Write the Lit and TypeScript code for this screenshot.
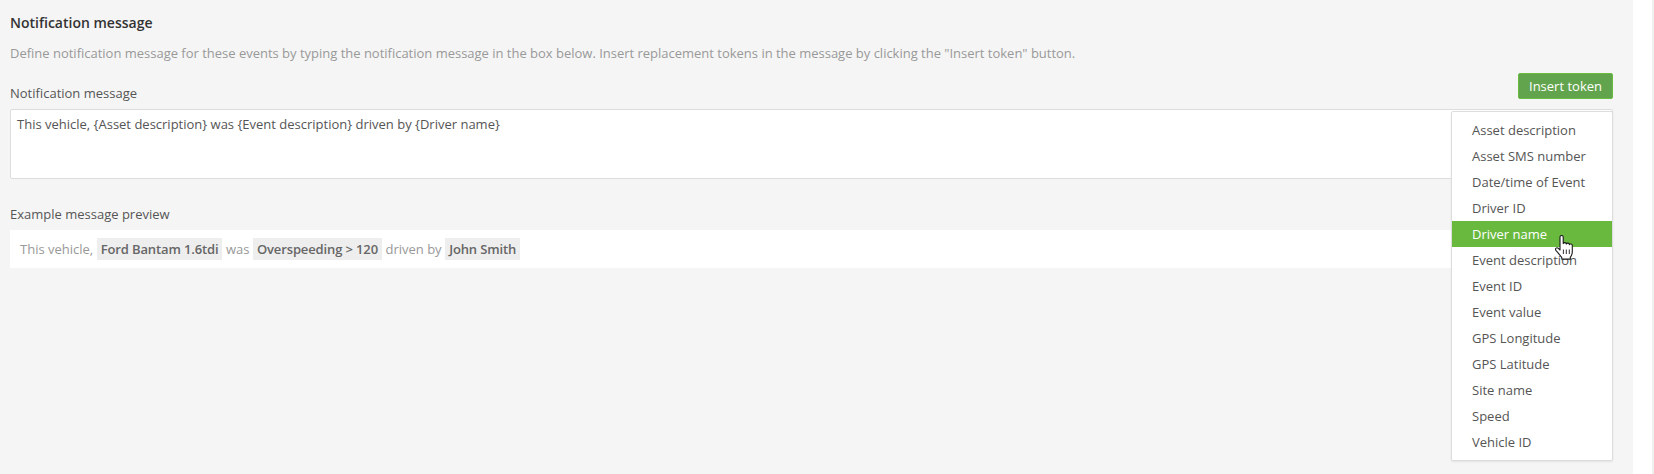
import { LitElement, html, css } from "lit";
import { customElement } from "lit/decorators.js";

const TOKENS = [
  "Asset description", "Asset SMS number", "Date/time of Event", "Driver ID", "Driver name",
  "Event description", "Event ID", "Event value", "GPS Longitude", "GPS Latitude",
  "Site name", "Speed", "Vehicle ID",
];

@customElement("app-root")
export class AppRoot extends LitElement {
  static styles = css`
    :host { display: flex; justify-content: space-between; width: 1654px; height: 474px; background: #fff; overflow: hidden;
      font-family: "Open Sans", sans-serif; font-size: 13px; color: #555; }
    .edge { width: 2px; background: #f0f0f0; }
    .page { box-sizing: border-box; width: 1633px; height: 474px; background: #f5f5f5; padding: 13px 20px 0 10px; }
    h2 { margin: 0; font-size: 14px; font-weight: 600; line-height: 20px; color: #333; }
    .desc { margin: 0; padding-top: 11px; line-height: 18px; color: #999; letter-spacing: -0.01px; }
    .head { display: flex; justify-content: space-between; align-items: flex-end; margin-top: 12px; height: 35px; }
    .label { line-height: 18px; color: #555; }
    .head .label { padding-bottom: 7px; }
    .btn { box-sizing: border-box; width: 95px; height: 26px; background: #62a44d; border: 1px solid #6abb3f; border-radius: 2px;
      color: #fff; font: 13px "Open Sans", sans-serif; padding: 0; margin-bottom: 10px; }
    .field { position: relative; }
    .box { box-sizing: border-box; height: 70px; background: #fff; border: 1px solid #ddd; border-radius: 2px; padding: 5px 6px; line-height: 18px; color: #555; }
    .menu { position: absolute; top: 2px; right: 0; width: 162px; box-sizing: border-box; background: #fff; border: 1px solid #ddd;
      border-radius: 2px; box-shadow: 0 1px 2px rgba(0,0,0,.08); padding: 5px 0; margin: 0; list-style: none; }
    .menu li { height: 26px; line-height: 26px; padding-left: 20px; color: #555; }
    .menu li.on { background: #69b93f; color: #fff; position: relative; }
    .cursor { position: absolute; left: 103px; top: 14px; width: 18px; height: 25px; }
    .preview-label { margin-top: 26px; }
    .preview { box-sizing: border-box; margin-top: 7px; height: 38px; background: #fff; padding: 8px 10px; display: flex; align-items: center; gap: 3.5px; color: #999; }
    .chip { background: #eee; color: #666; font-weight: 600; height: 22px; line-height: 22px; padding: 0 4px; letter-spacing: -0.13px; }
  `;

  render() {
    return html`<div class="page">
      <h2>Notification message</h2>
      <p class="desc">Define notification message for these events by typing the notification message in the box below. Insert replacement tokens in the message by clicking the "Insert token" button.</p>
      <div class="head">
        <span class="label">Notification message</span>
        <button class="btn">Insert token</button>
      </div>
      <div class="field">
        <div class="box">This vehicle, {Asset description} was {Event description} driven by {Driver name}</div>
        <ul class="menu">
          ${TOKENS.map((t) => html`<li class=${t === "Driver name" ? "on" : ""}>${t}${t === "Driver name" ? html`<svg class="cursor" viewBox="0 0 18 25"><path d="M5 2c0-2 3.200-2 3.200 0v6.600c.4-1.400 3-1.300 3.100.4.400-1.300 3-1.200 3.100.6.500-1 2.900-.8 2.900 1v6.400c0 2.600-1 3.800-2 5.400v1.700H6.800v-1.500C5.200 20.500 3 17.600.9 15.300-.3 13.700 1.700 12 3.200 13.200L5 15Z" fill="#fff" stroke="#1a1a1a" stroke-width="1.100" stroke-linejoin="round"/><path d="M8.400 14.500V19M11.300 14.500V19M14.300 14.500V19" stroke="#1a1a1a" stroke-width=".9"/></svg>` : ""}</li>`)}
        </ul>
      </div>
      <div class="label preview-label">Example message preview</div>
      <div class="preview"><span>This vehicle,</span><span class="chip">Ford Bantam 1.6tdi</span><span>was</span><span class="chip">Overspeeding &gt; 120</span><span>driven by</span><span class="chip">John Smith</span></div>
    </div><div class="edge"></div>`;
  }
}
